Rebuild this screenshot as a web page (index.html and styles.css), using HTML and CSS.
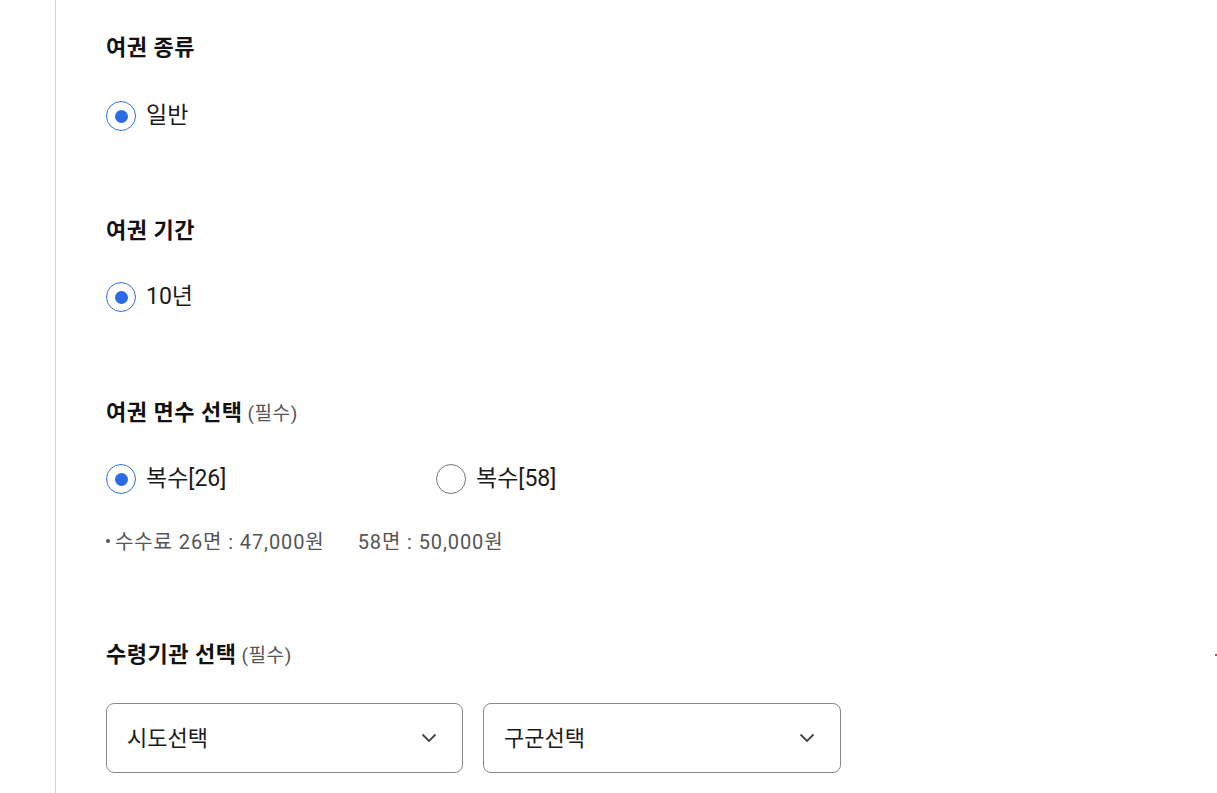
FILE: index.html
```html
<!DOCTYPE html>
<html lang="ko">
<head>
<meta charset="utf-8">
<link rel="stylesheet" href="styles.css">
</head>
<body>
<div class="page">
  <section class="sec first">
    <h3 class="title">여권 종류</h3>
    <div class="options">
      <label class="opt"><span class="radio on"></span><span class="lbl">일반</span></label>
    </div>
  </section>
  <section class="sec second">
    <h3 class="title">여권 기간</h3>
    <div class="options">
      <label class="opt"><span class="radio on"></span><span class="lbl">10년</span></label>
    </div>
  </section>
  <section class="sec third">
    <h3 class="title">여권 면수 선택 <span class="req">(필수)</span></h3>
    <div class="options">
      <label class="opt"><span class="radio on"></span><span class="lbl">복수[26]</span></label>
      <label class="opt"><span class="radio"></span><span class="lbl">복수[58]</span></label>
    </div>
    <p class="note"><span class="bullet"></span>수수료 26면 : 47,000원<span class="sp"></span>58면 : 50,000원</p>
  </section>
  <section class="sec last">
    <h3 class="title">수령기관 선택 <span class="req">(필수)</span></h3>
    <div class="selects">
      <div class="select"><span>시도선택</span>
        <svg width="16" height="10" viewBox="0 0 16 10"><path d="M1.5 1.5 L8 8 L14.5 1.5" fill="none" stroke="#444" stroke-width="1.8"/></svg>
      </div>
      <div class="select"><span>구군선택</span>
        <svg width="16" height="10" viewBox="0 0 16 10"><path d="M1.5 1.5 L8 8 L14.5 1.5" fill="none" stroke="#444" stroke-width="1.8"/></svg>
      </div>
    </div>
  </section>
</div>
<span class="mark"></span>
</body>
</html>
```

FILE: styles.css
```css
html, body {
  margin: 0;
  padding: 0;
  background: #fff;
}
body {
  font-family: Roboto, "Noto Sans CJK KR", sans-serif;
  color: #111;
  height: 793px;
  overflow: hidden;
}
.page {
  box-sizing: border-box;
  margin-left: 55px;
  border-left: 1px solid #d4d4d4;
  padding-left: 50px;
  padding-top: 33px;
  height: 793px;
}
.sec {
  margin-bottom: 86px;
}
.sec.first {
  margin-bottom: 85px;
}
.sec.third {
  margin-bottom: 85px;
}
.title {
  margin: 0;
  height: 30px;
  display: flex;
  align-items: baseline;
  gap: 5px;
  font-size: 22px;
  line-height: 30px;
  font-weight: 700;
  letter-spacing: 0.5px;
  color: #111;
}
.req {
  font-size: 19px;
  font-weight: 400;
  letter-spacing: 0.6px;
  color: #555;
}
.options {
  display: flex;
  margin-top: 36px;
}
.first .options {
  margin-top: 38px;
}
.opt {
  display: flex;
  align-items: center;
  width: 330px;
  height: 30px;
}
.radio {
  box-sizing: border-box;
  width: 30px;
  height: 30px;
  border-radius: 50%;
  border: 1px solid #777;
  display: flex;
  align-items: center;
  justify-content: center;
  flex: none;
}
.radio.on {
  border-color: #2f72e4;
}
.radio.on::after {
  content: "";
  width: 13px;
  height: 13px;
  border-radius: 50%;
  background: #2a6be6;
}
.lbl {
  margin-left: 10px;
  font-size: 23px;
  line-height: 30px;
  color: #1a1a1a;
}
.note {
  margin: 35px 0 0;
  font-size: 20px;
  line-height: 26px;
  letter-spacing: 0.9px;
  color: #555;
  display: flex;
  align-items: center;
}
.bullet {
  width: 4px;
  height: 4px;
  border-radius: 50%;
  background: #555;
  margin-right: 5px;
  margin-top: -3px;
}
.sp {
  display: inline-block;
  width: 33px;
}
.sec.last {
  margin-bottom: 0;
}
.selects {
  display: flex;
  gap: 20px;
  margin-top: 33px;
}
.select {
  box-sizing: border-box;
  width: 357px;
  height: 70px;
  border: 1px solid #888;
  border-radius: 8px;
  display: flex;
  align-items: center;
  justify-content: space-between;
  padding: 0 25px 4px 20px;
  font-size: 22px;
  color: #1a1a1a;
}
.select svg {
  margin-top: 4px;
}
.select + .select {
  width: 358px;
}
.mark {
  position: absolute;
  left: 1215px;
  top: 654px;
  width: 2px;
  height: 2px;
  background: #e33;
}
```
